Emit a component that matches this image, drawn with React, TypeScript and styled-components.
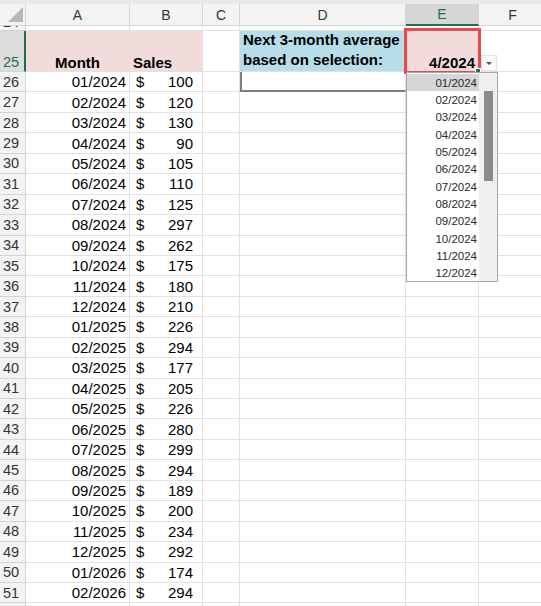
import React from "react";
import styled, { createGlobalStyle } from "styled-components";

const GlobalStyle = createGlobalStyle`
  html, body { margin: 0; padding: 0; background: #ffffff; overflow: hidden; }
  body { font-family: "Liberation Sans", Arial, sans-serif; }
`;

const COLS = [26, 104, 73, 37, 166, 73, 68];
const GRID = "#e1e1e1";
const HEAD_LINE = "#d4d4d4";
const GREEN = "#1e7145";
const ROW_H = 20.44;

const data: [string, number][] = [
  ["01/2024", 100], ["02/2024", 120], ["03/2024", 130], ["04/2024", 90],
  ["05/2024", 105], ["06/2024", 110], ["07/2024", 125], ["08/2024", 297],
  ["09/2024", 262], ["10/2024", 175], ["11/2024", 180], ["12/2024", 210],
  ["01/2025", 226], ["02/2025", 294], ["03/2025", 177], ["04/2025", 205],
  ["05/2025", 226], ["06/2025", 280], ["07/2025", 299], ["08/2025", 294],
  ["09/2025", 189], ["10/2025", 200], ["11/2025", 234], ["12/2025", 292],
  ["01/2026", 174], ["02/2026", 294],
];

const options = [
  "01/2024", "02/2024", "03/2024", "04/2024", "05/2024", "06/2024",
  "07/2024", "08/2024", "09/2024", "10/2024", "11/2024", "12/2024",
];

const Sheet = styled.div`
  position: relative;
  width: 541px;
  height: 606px;
  overflow: hidden;
  background: #fff;
  color: #000;
`;

const TopStrip = styled.div`
  height: 4px;
  background: #e9e9e9;
`;

const Row = styled.div<{ $h: number }>`
  display: flex;
  height: ${(p) => p.$h}px;
  width: max-content;
`;

const Corner = styled.div`
  width: ${COLS[0]}px;
  flex: none;
  box-sizing: border-box;
  background: #f3f3f3;
  border-right: 1px solid ${HEAD_LINE};
  border-bottom: 1px solid ${HEAD_LINE};
  position: relative;
  &::after {
    content: "";
    position: absolute;
    right: 2px;
    bottom: 3px;
    width: 0;
    height: 0;
    border-left: 15px solid transparent;
    border-bottom: 15px solid #b8b8b8;
  }
`;

const ColHead = styled.div<{ $w: number; $active?: boolean }>`
  width: ${(p) => p.$w}px;
  flex: none;
  box-sizing: border-box;
  display: flex;
  align-items: center;
  justify-content: center;
  font-size: 14px;
  color: ${(p) => (p.$active ? GREEN : "#333")};
  background: ${(p) => (p.$active ? "#d6d6d6" : "#f3f3f3")};
  border-right: 1px solid ${HEAD_LINE};
  border-bottom: ${(p) => (p.$active ? `2px solid ${GREEN}` : `1px solid ${HEAD_LINE}`)};
`;

const RowHead = styled.div<{ $active?: boolean; $bottom?: boolean }>`
  width: ${COLS[0]}px;
  flex: none;
  box-sizing: border-box;
  display: flex;
  align-items: ${(p) => (p.$bottom ? "flex-end" : "center")};
  padding-left: 3px;
  padding-bottom: ${(p) => (p.$bottom ? "1px" : "0")};
  font-size: 14.5px;
  color: ${(p) => (p.$active ? GREEN : "#333")};
  background: ${(p) => (p.$active ? "#dcdcdc" : "#f3f3f3")};
  border-right: ${(p) => (p.$active ? `2px solid ${GREEN}` : `1px solid ${HEAD_LINE}`)};
  border-bottom: 1px solid ${HEAD_LINE};
  overflow: hidden;
`;

const ClippedLabel = styled.span`
  display: block;
  margin-top: -13px;
  line-height: 16px;
`;

const Cell = styled.div<{
  $w: number;
  $align?: "left" | "right" | "center";
  $bg?: string;
  $bold?: boolean;
  $bottom?: boolean;
}>`
  width: ${(p) => p.$w}px;
  flex: none;
  box-sizing: border-box;
  display: flex;
  align-items: ${(p) => (p.$bottom ? "flex-end" : "center")};
  justify-content: ${(p) =>
    p.$align === "right" ? "flex-end" : p.$align === "center" ? "center" : "flex-start"};
  padding: 0 3px;
  font-size: 15px;
  font-weight: ${(p) => (p.$bold ? 700 : 400)};
  background: ${(p) => p.$bg || "transparent"};
  border-right: 1px solid ${(p) => (p.$bg ? p.$bg : GRID)};
  border-bottom: 1px solid ${GRID};
  white-space: nowrap;
`;

const MoneyCell = styled(Cell)`
  justify-content: space-between;
  padding: 0 9px 0 6px;
`;

const LabelCell = styled(Cell)`
  flex-direction: column;
  align-items: flex-start;
  justify-content: flex-end;
  line-height: 20px;
  padding: 0 3px 1px;
`;

const BoxedCell = styled(Cell)`
  border-left: 2px solid #7f7f7f;
  border-bottom: 2px solid #7f7f7f;
`;

const SelectBox = styled.div`
  position: absolute;
  left: 404px;
  top: 28px;
  width: 77px;
  height: 46px;
  box-sizing: border-box;
  border: 3px solid #e9494e;
  pointer-events: none;
`;

const FillHandle = styled.div`
  position: absolute;
  left: 475px;
  top: 68px;
  width: 4px;
  height: 4px;
  background: ${GREEN};
  border: 1px solid #fff;
`;

const ArrowButton = styled.div`
  position: absolute;
  left: 481px;
  top: 55px;
  width: 16px;
  height: 16px;
  box-sizing: border-box;
  background: #fafafa;
  border: 1px solid #e2e2e2;
  display: flex;
  align-items: center;
  justify-content: center;
  &::after {
    content: "";
    width: 0;
    height: 0;
    border-left: 3px solid transparent;
    border-right: 3px solid transparent;
    border-top: 3px solid #555;
  }
`;

const DropList = styled.div`
  position: absolute;
  left: 406px;
  top: 72px;
  width: 92px;
  height: 210px;
  box-sizing: border-box;
  background: #fff;
  border: 1px solid #a6a6a6;
  display: flex;
`;

const Options = styled.div`
  flex: 1;
  padding-top: 1px;
`;

const Option = styled.div<{ $sel?: boolean }>`
  height: 17.33px;
  display: flex;
  align-items: center;
  justify-content: flex-end;
  padding-right: 2px;
  font-size: 11.5px;
  color: #2a2a2a;
  background: ${(p) => (p.$sel ? "#d6d6d6" : "transparent")};
`;

const ScrollTrack = styled.div`
  width: 18px;
  flex: none;
  background: #f0f0f0;
  position: relative;
`;

const Thumb = styled.div`
  position: absolute;
  left: 5px;
  top: 18px;
  width: 9px;
  height: 90px;
  background: #8a8a8a;
`;

const letters = ["A", "B", "C", "D", "E", "F"];

export default function App() {
  return (
    <>
      <GlobalStyle />
      <Sheet>
        <TopStrip />
        <Row $h={22}>
          <Corner />
          {letters.map((l, i) => (
            <ColHead key={l} $w={COLS[i + 1]} $active={l === "E"}>
              {l}
            </ColHead>
          ))}
        </Row>
        <Row $h={5}>
          <RowHead>
            <ClippedLabel>24</ClippedLabel>
          </RowHead>
          {COLS.slice(1).map((w, i) => (
            <Cell key={i} $w={w} />
          ))}
        </Row>
        <Row $h={41}>
          <RowHead $active $bottom>
            25
          </RowHead>
          <Cell $w={COLS[1]} $bg="#f2dcdb" $bold $bottom $align="center">
            Month
          </Cell>
          <Cell $w={COLS[2]} $bg="#f2dcdb" $bold $bottom>
            Sales
          </Cell>
          <Cell $w={COLS[3]} />
          <LabelCell $w={COLS[4]} $bg="#b7dee8" $bold>
            <span>Next 3-month average</span>
            <span>based on selection:</span>
          </LabelCell>
          <Cell $w={COLS[5]} $bg="#f2dcdb" $bold $bottom $align="right">
            4/2024
          </Cell>
          <Cell $w={COLS[6]} />
        </Row>
        {data.map(([m, v], i) => (
          <Row key={m} $h={ROW_H}>
            <RowHead>{26 + i}</RowHead>
            <Cell $w={COLS[1]} $align="right">
              {m}
            </Cell>
            <MoneyCell $w={COLS[2]}>
              <span>$</span>
              <span>{v}</span>
            </MoneyCell>
            <Cell $w={COLS[3]} />
            {i === 0 ? <BoxedCell $w={COLS[4]} /> : <Cell $w={COLS[4]} />}
            <Cell $w={COLS[5]} />
            <Cell $w={COLS[6]} />
          </Row>
        ))}
        <Row $h={ROW_H}>
          <RowHead />
          {COLS.slice(1).map((w, i) => (
            <Cell key={i} $w={w} />
          ))}
        </Row>

        <SelectBox />
        <FillHandle />
        <ArrowButton />
        <DropList>
          <Options>
            {options.map((o, i) => (
              <Option key={o} $sel={i === 0}>
                {o}
              </Option>
            ))}
          </Options>
          <ScrollTrack>
            <Thumb />
          </ScrollTrack>
        </DropList>
      </Sheet>
    </>
  );
}
